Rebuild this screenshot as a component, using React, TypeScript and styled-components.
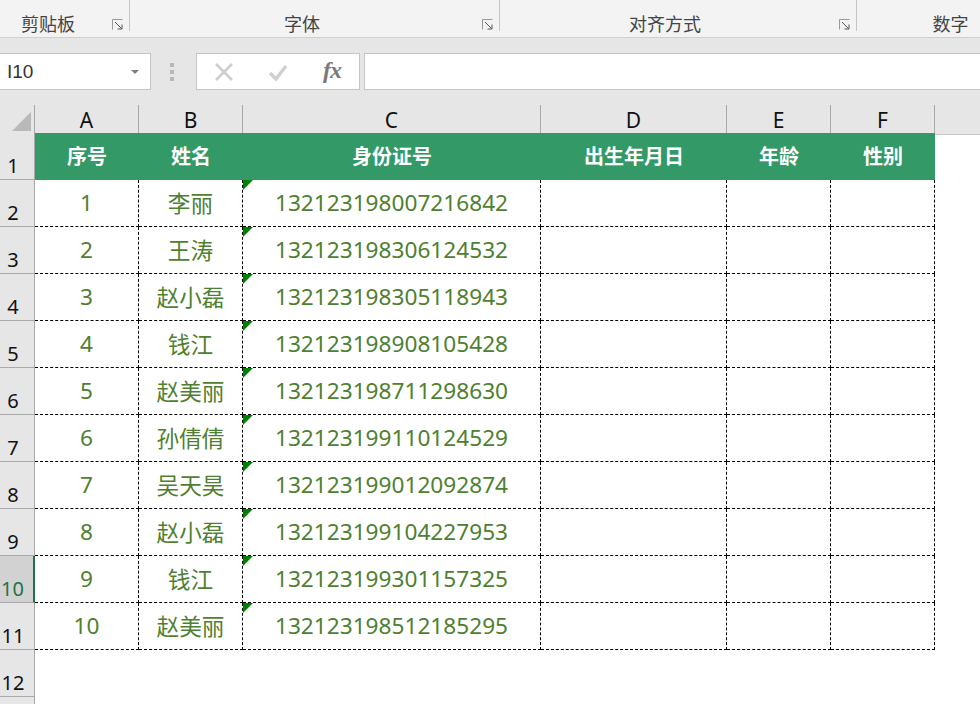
import React from 'react';
import styled, { createGlobalStyle } from 'styled-components';

const CJK = `"Noto Sans", "Noto Sans CJK SC", sans-serif`;
const COLUMNS = '35px 104px 104px 298px 186px 104px 104px';

const GlobalStyle = createGlobalStyle`
  html, body {
    margin: 0;
    padding: 0;
    background: #fff;
    overflow: hidden;
  }
  body {
    font-family: ${CJK};
  }
`;

const Page = styled.div`
  width: 980px;
  height: 704px;
  overflow: hidden;
  display: flex;
  flex-direction: column;
`;

const Ribbon = styled.div`
  height: 37px;
  flex: none;
  display: flex;
  background: #f3f3f3;
  border-bottom: 1px solid #d0d0d0;
`;

const RibbonGroup = styled.div<{ $width: number; $last?: boolean }>`
  width: ${({ $width }) => $width}px;
  height: 31px;
  flex: none;
  box-sizing: border-box;
  display: flex;
  align-items: flex-end;
  padding-right: 5px;
  border-right: ${({ $last }) => ($last ? 'none' : '1px solid #c6c6c6')};
`;

const RibbonLabel = styled.div<{ $left?: number; $right?: number }>`
  flex: 1;
  text-align: center;
  font-size: 18px;
  line-height: 24px;
  margin-bottom: -5px;
  padding-left: ${({ $left }) => $left || 0}px;
  padding-right: ${({ $right }) => $right || 0}px;
  color: #444;
  white-space: nowrap;
`;

const LauncherIcon = styled.svg`
  width: 12px;
  height: 11px;
  flex: none;
  margin-left: -12px;
  margin-bottom: 1px;
`;

const FormulaBar = styled.div`
  height: 67px;
  flex: none;
  box-sizing: border-box;
  display: flex;
  align-items: flex-start;
  padding-top: 15px;
  background: #e6e6e6;
`;

const FieldBox = styled.div`
  height: 37px;
  box-sizing: border-box;
  background: #fff;
  border: 1px solid #c6c6c6;
  display: flex;
  align-items: center;
`;

const NameBox = styled(FieldBox)`
  width: 152px;
  flex: none;
  margin-left: -1px;
  padding: 0 11px 0 7px;
  justify-content: space-between;
  font-family: "Liberation Sans", sans-serif;
  font-size: 19px;
  color: #333;
`;

const NameArrow = styled.span`
  width: 0;
  height: 0;
  border-left: 4px solid transparent;
  border-right: 4px solid transparent;
  border-top: 4px solid #808080;
`;

const Grip = styled.div`
  width: 45px;
  height: 37px;
  flex: none;
  display: flex;
  flex-direction: column;
  align-items: center;
  justify-content: center;
  gap: 3px;
  padding-right: 3px;
  box-sizing: border-box;
`;

const GripDot = styled.span`
  width: 4px;
  height: 4px;
  background: #b8b8b8;
`;

const FormulaButtons = styled(FieldBox)`
  width: 164px;
  flex: none;
  margin-right: 4px;
  justify-content: space-between;
  padding: 0 17px 0 17px;
`;

const FormulaInput = styled(FieldBox)`
  flex: 1;
  margin-right: -2px;
`;

const FxLabel = styled.span`
  font-family: "Liberation Serif", serif;
  font-style: italic;
  font-weight: 700;
  font-size: 24px;
  letter-spacing: -1px;
  line-height: 1;
  color: #7a7a7a;
  width: 20px;
  text-align: center;
  margin-top: -3px;
`;

const Sheet = styled.div`
  flex: 1;
  display: flex;
  flex-direction: column;
`;

const Row = styled.div<{ $height: number }>`
  display: grid;
  grid-template-columns: ${COLUMNS} 1fr;
  height: ${({ $height }) => $height}px;
  flex: none;
`;

const ColumnHeader = styled.div`
  box-sizing: border-box;
  background: #e6e6e6;
  border-right: 1px solid #a9a9a9;
  border-bottom: 1px solid #a9a9a9;
  font-size: 21px;
  line-height: 27px;
  padding-top: 2px;
  text-align: center;
  color: #111;
`;

const HeaderFill = styled.div`
  background: #e6e6e6;
  border-bottom: 1px solid #c6c6c6;
`;

const Corner = styled(ColumnHeader)`
  display: flex;
  align-items: flex-end;
  justify-content: flex-end;
  padding: 0 3px 3px 0;
`;

const CornerTriangle = styled.span`
  width: 0;
  height: 0;
  border-left: 19px solid transparent;
  border-bottom: 19px solid #b9b9b9;
`;

const RowNumber = styled.div<{ $selected?: boolean }>`
  box-sizing: border-box;
  display: flex;
  align-items: flex-end;
  justify-content: center;
  padding-right: 8px;
  font-size: 20px;
  line-height: 26px;
  background: ${({ $selected }) => ($selected ? '#d2d2d2' : '#e6e6e6')};
  color: ${({ $selected }) => ($selected ? '#217346' : '#111')};
  border-bottom: 1px solid #a9a9a9;
  border-right: ${({ $selected }) => ($selected ? '2px solid #217346' : '1px solid #a9a9a9')};
`;

const TitleCell = styled.div`
  box-sizing: border-box;
  background: #339966;
  color: #fff;
  font-family: "Noto Sans CJK SC", sans-serif;
  font-size: 20px;
  font-weight: 700;
  display: flex;
  align-items: center;
  justify-content: center;
  padding-bottom: 3px;
`;

const DataCell = styled.div<{ $flag?: boolean }>`
  position: relative;
  box-sizing: border-box;
  border-right: 1px dashed #000;
  border-bottom: 1px dashed #000;
  color: #4f7f31;
  font-size: 22.65px;
  display: flex;
  align-items: center;
  justify-content: center;
  padding-bottom: 2px;
  white-space: nowrap;

  ${({ $flag }) =>
    $flag &&
    `&::before {
      content: "";
      position: absolute;
      left: 0;
      top: 0;
      width: 10px;
      height: 10px;
      background: #008000;
      clip-path: polygon(0 0, 100% 0, 0 100%);
    }`}
`;

const rows = [
  ['1', '李丽', '132123198007216842'],
  ['2', '王涛', '132123198306124532'],
  ['3', '赵小磊', '132123198305118943'],
  ['4', '钱江', '132123198908105428'],
  ['5', '赵美丽', '132123198711298630'],
  ['6', '孙倩倩', '132123199110124529'],
  ['7', '吴天昊', '132123199012092874'],
  ['8', '赵小磊', '132123199104227953'],
  ['9', '钱江', '132123199301157325'],
  ['10', '赵美丽', '132123198512185295'],
];

const titles = ['序号', '姓名', '身份证号', '出生年月日', '年龄', '性别'];

function Launcher() {
  return (
    <LauncherIcon viewBox="0 0 12 11">
      <path d="M0.5 10.5V0.5H10.5" fill="none" stroke="#9a9a9a" />
      <path d="M3 3L9.5 9.5M5.5 10H10V5.5" fill="none" stroke="#555" />
    </LauncherIcon>
  );
}

export default function App() {
  return (
    <Page>
      <GlobalStyle />
      <Ribbon>
        <RibbonGroup $width={130}>
          <RibbonLabel $right={28}>剪贴板</RibbonLabel>
          <Launcher />
        </RibbonGroup>
        <RibbonGroup $width={370}>
          <RibbonLabel $right={20}>字体</RibbonLabel>
          <Launcher />
        </RibbonGroup>
        <RibbonGroup $width={357}>
          <RibbonLabel $right={21}>对齐方式</RibbonLabel>
          <Launcher />
        </RibbonGroup>
        <RibbonGroup $width={123} $last>
          <RibbonLabel $left={69}>数字</RibbonLabel>
        </RibbonGroup>
      </Ribbon>
      <FormulaBar>
        <NameBox>
          I10
          <NameArrow />
        </NameBox>
        <Grip>
          <GripDot />
          <GripDot />
          <GripDot />
        </Grip>
        <FormulaButtons>
          <svg width="20" height="20" viewBox="0 0 20 20">
            <path d="M2 2L18 18M18 2L2 18" stroke="#cfcfcf" strokeWidth="2.6" fill="none" />
          </svg>
          <svg width="20" height="20" viewBox="0 0 20 20">
            <path d="M2 11L8 17L18 4" stroke="#cfcfcf" strokeWidth="3.4" fill="none" />
          </svg>
          <FxLabel>fx</FxLabel>
        </FormulaButtons>
        <FormulaInput />
      </FormulaBar>
      <Sheet>
        <Row $height={28}>
          <Corner>
            <CornerTriangle />
          </Corner>
          {['A', 'B', 'C', 'D', 'E', 'F'].map((c) => (
            <ColumnHeader key={c}>{c}</ColumnHeader>
          ))}
          <HeaderFill />
        </Row>
        <Row $height={47}>
          <RowNumber>1</RowNumber>
          {titles.map((t) => (
            <TitleCell key={t}>{t}</TitleCell>
          ))}
        </Row>
        {rows.map((r, i) => (
          <Row $height={47} key={r[0]}>
            <RowNumber $selected={i === 8}>{i + 2}</RowNumber>
            <DataCell>{r[0]}</DataCell>
            <DataCell>{r[1]}</DataCell>
            <DataCell $flag>{r[2]}</DataCell>
            <DataCell />
            <DataCell />
            <DataCell />
          </Row>
        ))}
        <Row $height={47}>
          <RowNumber>12</RowNumber>
        </Row>
        <Row $height={47}>
          <RowNumber />
        </Row>
      </Sheet>
    </Page>
  );
}
